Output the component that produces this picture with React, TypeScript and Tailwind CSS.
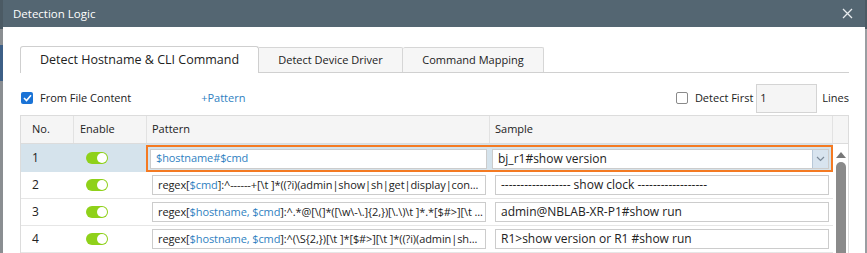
import React from "react";

const rows = [
  {
    no: 1,
    pattern: [{ t: "$hostname#$cmd", v: true }],
    sample: "bj_r1#show version",
  },
  {
    no: 2,
    pattern: [
      { t: "regex[" },
      { t: "$cmd", v: true },
      { t: "]:^------+[\\t ]*((?i)(admin|show|sh|get|display|con..." },
    ],
    sample: "------------------ show clock ------------------",
  },
  {
    no: 3,
    pattern: [
      { t: "regex[" },
      { t: "$hostname, $cmd", v: true },
      { t: "]:^.*@[\\(]*([\\w\\-\\.]{2,})[\\.\\)\\t ]*.*[$#>][\\t ..." },
    ],
    sample: "admin@NBLAB-XR-P1#show run",
  },
  {
    no: 4,
    pattern: [
      { t: "regex[" },
      { t: "$hostname, $cmd", v: true },
      { t: "]:^(\\S{2,})[\\t ]*[$#>][\\t ]*((?i)(admin|sh..." },
    ],
    sample: "R1>show version or R1 #show run",
  },
];

function Toggle() {
  return (
    <div className="w-[22px] h-[12px] rounded-full bg-[#8fd11a] flex items-center justify-end pr-[1px]">
      <div className="w-[10px] h-[10px] rounded-full bg-white" />
    </div>
  );
}

function PatternText({ parts }: { parts: { t: string; v?: boolean }[] }) {
  return (
    <div className="w-full h-[20px] bg-white border border-[#cccccc] px-[5px] flex items-center overflow-hidden whitespace-nowrap text-[11px] tracking-[-0.1px]">
      {parts.map((p, i) => (
        <span key={i} className={p.v ? "text-[#2f7fc1]" : "text-[#222]"}>
          {p.t}
        </span>
      ))}
    </div>
  );
}

export default function App() {
  return (
    <div
      className="w-[867px] h-[253px] flex overflow-hidden text-[12px] text-[#222]"
      style={{ fontFamily: '"Open Sans", "Liberation Sans", sans-serif' }}
    >
      {/* backdrop strip left */}
      <div className="w-[3px] flex flex-col">
        <div className="h-[29px] bg-[#4b5a64]" />
        <div className="h-[16px] bg-[#8a8e92]" />
        <div className="h-[36px] bg-[#3d5f86]" />
        <div className="flex-1 bg-[#8a8e92]" />
      </div>

      <div className="flex-1 min-w-0 flex flex-col bg-white">
        {/* header */}
        <div className="h-[29px] bg-[#546672] flex items-center justify-between pl-[10px] pr-[10px]">
          <span className="text-white text-[11.5px]">Detection Logic</span>
          <svg width="11" height="11" viewBox="0 0 11 11" className="mr-[2px]">
            <path d="M1 1 L10 10 M10 1 L1 10" stroke="#e8ecef" strokeWidth="1.3" />
          </svg>
        </div>

        <div className="pl-[17px] pr-[16px]">
          {/* tabs */}
          <div className="mt-[19px] flex items-end border-b border-[#d0d0d0] h-[27px]">
            <div className="w-[239px] h-[27px] bg-white border border-b-0 border-[#cfcfcf] rounded-t-[3px] flex items-center justify-center text-[12.5px] text-[#222] -mb-[1px] relative">
              Detect Hostname &amp; CLI Command
            </div>
            <div className="w-[144px] h-[25px] bg-[#f6f6f6] border border-l-0 border-b-0 border-[#d6d6d6] rounded-tr-[2px] flex items-center justify-center text-[11px]">
              Detect Device Driver
            </div>
            <div className="w-[141px] h-[25px] bg-[#f6f6f6] border border-l-0 border-b-0 border-[#d6d6d6] rounded-t-[2px] flex items-center justify-center text-[11px]">
              Command Mapping
            </div>
          </div>

          {/* options row */}
          <div className="mt-[10px] mb-[2px] h-[30px] flex items-center text-[11px]">
            <div className="w-[12px] h-[12px] rounded-[2px] bg-[#1a73d6] flex items-center justify-center ml-[1px]">
              <svg width="9" height="8" viewBox="0 0 9 8">
                <path d="M1 4 L3.5 6.5 L8 1.2" stroke="white" strokeWidth="1.6" fill="none" />
              </svg>
            </div>
            <span className="ml-[7px]">From File Content</span>
            <span className="ml-[70px] text-[#2f7fc1]">+Pattern</span>
            <div className="flex-1" />
            <div className="w-[12px] h-[12px] rounded-[2px] border border-[#8a8a8a] bg-white" />
            <span className="ml-[7px]">Detect First</span>
            <div className="ml-[3px] w-[61px] h-[29px] bg-[#f5f5f5] border border-[#d4d4d4] flex items-center pl-[3px]">
              1
            </div>
            <span className="ml-[5px]">Lines</span>
          </div>

          {/* table */}
          <div className="w-[829px] border border-[#dcdcdc] border-b-0">
            <div className="flex h-[28px] bg-[#f5f5f5] border-b border-[#dcdcdc] text-[11px]">
              <div className="w-[53px] border-r border-[#e2e2e2] pl-[11px] flex items-center">No.</div>
              <div className="w-[73px] border-r border-[#e2e2e2] pl-[6px] flex items-center">Enable</div>
              <div className="w-[343px] border-r border-[#e2e2e2] pl-[5px] flex items-center">Pattern</div>
              <div className="w-[343px] border-r border-[#e2e2e2] pl-[5px] flex items-center">Sample</div>
              <div className="flex-1" />
            </div>

            <div className="flex">
              <div className="w-[812px]">
                {rows.map((r) => {
                  const first = r.no === 1;
                  return (
                    <div
                      key={r.no}
                      className={
                        first
                          ? "flex h-[28px] bg-[#d5e3ec]"
                          : "flex h-[27px] border-b border-[#e6e6e6]"
                      }
                    >
                      <div className="w-[53px] pl-[11px] flex items-center">{r.no}</div>
                      <div className="w-[73px] pl-[12px] flex items-center">
                        <Toggle />
                      </div>
                      {first ? (
                        <div className="flex-1 min-w-0 flex border-2 border-[#f47a22] -ml-[1px] mt-[1px]">
                          <div className="w-[341px] pl-[2px] pr-[2px] flex items-center">
                            <PatternText parts={r.pattern} />
                          </div>
                          <div className="flex-1 min-w-0 pl-[3px] pr-[2px] flex items-center">
                            <div className="w-full h-[20px] bg-white border border-[#cccccc] flex items-center">
                              <span className="flex-1 pl-[5px]">{r.sample}</span>
                              <div className="w-[16px] h-[18px] bg-[#d8e4ef] border-l border-[#b8c8d8] flex items-center justify-center">
                                <svg width="9" height="6" viewBox="0 0 9 6">
                                  <path d="M1 1 L4.5 4.5 L8 1" stroke="#7b8a99" strokeWidth="1.2" fill="none" />
                                </svg>
                              </div>
                            </div>
                          </div>
                        </div>
                      ) : (
                        <>
                          <div className="w-[343px] pl-[5px] pr-[4px] flex items-center">
                            <PatternText parts={r.pattern} />
                          </div>
                          <div className="flex-1 min-w-0 pl-[5px] pr-[4px] flex items-center">
                            <div className="w-full h-[20px] bg-white border border-[#cccccc] flex items-center pl-[5px] whitespace-nowrap overflow-hidden">
                              {r.sample}
                            </div>
                          </div>
                        </>
                      )}
                    </div>
                  );
                })}
              </div>
              {/* scrollbar */}
              <div className="flex-1 flex flex-col items-center pt-[8px]">
                <svg width="10" height="6" viewBox="0 0 10 6">
                  <path d="M5 0 L10 6 L0 6 Z" fill="#777" />
                </svg>
                <div className="mt-[4px] w-[10px] flex-1 rounded-t-full bg-[#8a8a8a]" />
              </div>
            </div>
          </div>
        </div>
      </div>

      <div className="w-[2px] flex flex-col">
        <div className="h-[29px] bg-[#4b5a64]" />
        <div className="flex-1 bg-[#9a9ea2]" />
      </div>
    </div>
  );
}
